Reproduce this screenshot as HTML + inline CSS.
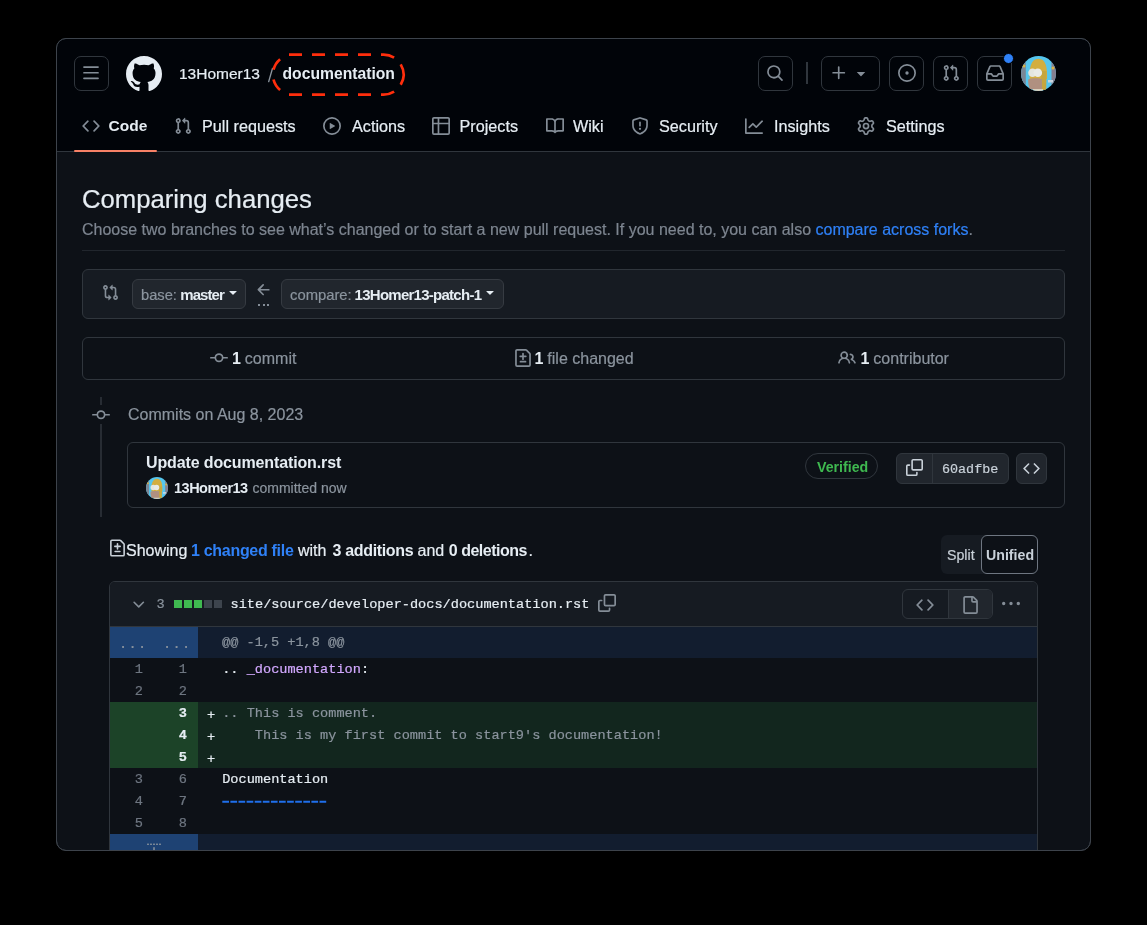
<!DOCTYPE html>
<html><head><meta charset="utf-8">
<style>
*{box-sizing:border-box;margin:0;padding:0}
html,body{width:1147px;height:925px;background:#000;overflow:hidden}
body{font-family:"Liberation Sans",sans-serif;color:#e6edf3;position:relative}
.a,.tab,.row{-webkit-text-stroke:0.2px currentColor}
b,[style*="font-weight:bold"]{-webkit-text-stroke:0 !important}
.a{position:absolute;white-space:nowrap}
.win{position:absolute;left:56px;top:38px;width:1035px;height:813px;border:1px solid #3d434b;border-radius:10px;background:#0d1117;overflow:hidden}
.hdr{position:absolute;left:0;top:0;width:100%;height:113px;background:#010409;border-bottom:1px solid #30363d}
.btn{position:absolute;border:1px solid #30363d;border-radius:7px;background:#010409}
svg{display:block}
.ic{fill:#848d97}
.tab{position:absolute;top:117px;font-size:16.2px;line-height:18px;color:#e6edf3}
.mono{font-family:"Liberation Mono",monospace}
.muted{color:#7d8590}
.row{position:absolute;left:110px;width:927px;height:22px;font-family:"Liberation Mono",monospace;font-size:13.6px;line-height:22px;color:#e6edf3}
.row.add{background:#12261e}
.row.add .n1,.row.add .n2{background:#1c4328}
.row .n1,.row .n2{position:absolute;top:0;height:22px;text-align:right;color:#6e7681;padding-top:1px}
.row .n1{left:0;width:45px;padding-right:12px}
.row .n2{left:45px;width:43px;padding-right:11px}
.row.add .n2{left:0;width:88px;color:#e6edf3;font-weight:bold;padding-right:11px}
.row .pl{position:absolute;left:97px;top:0;padding-top:3px}
.row .c{position:absolute;left:112.2px;top:0;white-space:pre;padding-top:1px}
</style></head><body><div style="position:absolute;left:0;top:0;width:1147px;height:925px;will-change:transform">
<div class="win"></div>
<div class="a" style="left:57px;top:39px;width:1033px;height:112px;background:#010409;border-radius:9px 9px 0 0"></div>
<div class="a" style="left:57px;top:151px;width:1033px;height:1px;background:#30363d"></div>

<!-- hamburger -->
<div class="btn" style="left:74px;top:56px;width:35px;height:35px"></div>
<svg class="a" style="left:81.5px;top:63.7px" width="18" height="18" viewBox="0 0 16 16"><path class="ic" d="M1 2.75A.75.75 0 0 1 1.75 2h12.5a.75.75 0 0 1 0 1.5H1.75A.75.75 0 0 1 1 2.75Zm0 5A.75.75 0 0 1 1.75 7h12.5a.75.75 0 0 1 0 1.5H1.75A.75.75 0 0 1 1 7.75ZM1.75 12h12.5a.75.75 0 0 1 0 1.5H1.75a.75.75 0 0 1 0-1.5Z"/></svg>
<!-- github logo -->
<svg class="a" style="left:126px;top:56px" width="36" height="36" viewBox="0 0 32 32"><path fill="#e6edf3" d="M16 0C7.16 0 0 7.16 0 16c0 7.08 4.58 13.06 10.94 15.18.8.14 1.1-.34 1.1-.76 0-.38-.02-1.64-.02-2.98-4.02.74-5.06-.98-5.380-1.88-.18-.46-.96-1.88-1.64-2.26-.56-.3-1.36-1.040-.02-1.06 1.26-.02 2.16 1.16 2.46 1.64 1.44 2.42 3.74 1.74 4.66 1.32.14-1.04.56-1.74 1.02-2.14-3.56-.4-7.28-1.78-7.28-7.9 0-1.74.62-3.18 1.64-4.3-.16-.4-.72-2.04.16-4.24 0 0 1.34-.42 4.4 1.64 1.28-.36 2.64-.54 4-.54 1.36 0 2.72.18 4 .54 3.06-2.08 4.4-1.64 4.4-1.64.88 2.2.32 3.84.16 4.24 1.02 1.12 1.64 2.54 1.64 4.3 0 6.14-3.74 7.5-7.3 7.9.58.5 1.08 1.46 1.08 2.96 0 2.140-.02 3.86-.02 4.4 0 .42.3.92 1.1.76A16.03 16.03 0 0 0 32 16c0-8.84-7.16-16-16-16z"/></svg>
<div class="a" style="left:179px;top:64.5px;font-size:15.5px;line-height:18px">13Homer13</div>
<svg class="a" style="left:264px;top:64px" width="12" height="22" viewBox="264 64 12 22"><path d="M268.7 81.6L272.5 68.4" stroke="#8b949e" stroke-width="1.4" stroke-linecap="round"/></svg>
<div class="a" style="left:282.5px;top:64.5px;font-size:15.7px;line-height:18px;font-weight:bold">documentation</div>
<svg class="a" style="left:260px;top:44px" width="160" height="60" viewBox="260 44 160 60"><path d="M289 54.6H302M289 94.6H302M312 54.6H325M312 94.6H325M335 54.6H348M335 94.6H348M358 54.6H371M358 94.6H371M381 54.6H383.5A20 20 0 0 1 394.1 57.6M400.7 64.4A20 20 0 0 1 400.7 84.8M394.1 91.6A20 20 0 0 1 383.5 94.6H381M273.5 79.5A20 20 0 0 0 280.1 90M280.1 59.2A20 20 0 0 0 273.5 69.7" fill="none" stroke="#ff2e0c" stroke-width="2.7"/></svg>

<!-- right header buttons -->
<div class="btn" style="left:758px;top:56px;width:35px;height:35px"></div>
<svg class="a" style="left:766px;top:63.5px" width="18" height="18" viewBox="0 0 16 16"><path class="ic" d="M10.68 11.74a6 6 0 0 1-7.922-8.982 6 6 0 0 1 8.982 7.922l3.04 3.04a.749.749 0 0 1-.326 1.275.749.749 0 0 1-.734-.215ZM11.5 7a4.499 4.499 0 1 0-8.997 0A4.499 4.499 0 0 0 11.5 7Z"/></svg>
<div class="a" style="left:806px;top:62px;width:2px;height:22px;background:#30363d"></div>
<div class="btn" style="left:821px;top:56px;width:59px;height:35px"></div>
<svg class="a" style="left:829.5px;top:63.7px" width="18" height="18" viewBox="0 0 16 16"><path class="ic" d="M7.75 2a.75.75 0 0 1 .75.75V7h4.25a.75.75 0 0 1 0 1.5H8.5v4.25a.75.75 0 0 1-1.5 0V8.5H2.75a.75.75 0 0 1 0-1.5H7V2.75A.75.75 0 0 1 7.75 2Z"/></svg>
<svg class="a" style="left:851.5px;top:63.7px" width="18" height="18" viewBox="0 0 16 16"><path class="ic" d="m4.427 7.427 3.396 3.396a.25.25 0 0 0 .354 0l3.396-3.396A.25.25 0 0 0 11.396 7H4.604a.25.25 0 0 0-.177.427Z"/></svg>
<div class="btn" style="left:889px;top:56px;width:35px;height:35px"></div>
<svg class="a" style="left:897.5px;top:63.7px" width="18" height="18" viewBox="0 0 16 16"><path class="ic" d="M8 9.5a1.5 1.5 0 1 0 0-3 1.5 1.5 0 0 0 0 3Z M8 0a8 8 0 1 1 0 16A8 8 0 0 1 8 0ZM1.5 8a6.5 6.5 0 1 0 13 0 6.5 6.5 0 0 0-13 0Z"/></svg>
<div class="btn" style="left:933px;top:56px;width:35px;height:35px"></div>
<svg class="a" style="left:941.5px;top:63.7px" width="18" height="18" viewBox="0 0 16 16"><path class="ic" d="M1.5 3.25a2.25 2.25 0 1 1 3 2.122v5.256a2.251 2.251 0 1 1-1.5 0V5.372A2.25 2.25 0 0 1 1.5 3.25Zm5.677-.177L9.573.677A.25.25 0 0 1 10 .854V2.5h1A2.5 2.5 0 0 1 13.5 5v5.628a2.251 2.251 0 1 1-1.5 0V5a1 1 0 0 0-1-1h-1v1.646a.25.25 0 0 1-.427.177L7.177 3.427a.25.25 0 0 1 0-.354ZM3.75 2.5a.75.75 0 1 0 0 1.5.75.75 0 0 0 0-1.5Zm0 9.5a.75.75 0 1 0 0 1.5.75.75 0 0 0 0-1.5Zm8.250.75a.75.75 0 1 0 1.5 0 .75.75 0 0 0-1.5 0Z"/></svg>
<div class="btn" style="left:977px;top:56px;width:35px;height:35px"></div>
<svg class="a" style="left:985.5px;top:63.7px" width="18" height="18" viewBox="0 0 16 16"><path class="ic" d="M2.8 2.06A1.75 1.75 0 0 1 4.41 1h7.18c.7 0 1.333.417 1.61 1.06l2.74 6.395c.04.093.06.194.06.295v4.5A1.75 1.75 0 0 1 14.25 15H1.75A1.75 1.75 0 0 1 0 13.250v-4.5c0-.101.02-.202.06-.295Zm1.61.44a.25.25 0 0 0-.23.152L1.887 8H4.75a.75.75 0 0 1 .6.3L6.625 10h2.75l1.275-1.7a.75.75 0 0 1 .6-.3h2.863L11.820 2.652a.25.25 0 0 0-.23-.152Zm10.09 7h-2.875l-1.275 1.7a.75.75 0 0 1-.6.3h-3.5a.75.75 0 0 1-.6-.3L4.375 9.5H1.5v3.75c0 .138.112.25.25.25h12.5a.25.25 0 0 0 .25-.25Z"/></svg>
<div class="a" style="left:1003px;top:53px;width:11px;height:11px;border-radius:50%;background:#2f81f7;border:1.5px solid #010409"></div>
<!-- avatar -->
<svg class="a" style="left:1021px;top:56px" width="35" height="35" viewBox="0 0 35 35"><defs><clipPath id="cav"><circle cx="17.5" cy="17.5" r="17.5"/></clipPath></defs><g clip-path="url(#cav)"><rect width="35" height="35" fill="#55c6ee"/><rect x="0" y="0" width="4.8" height="35" fill="#7a8797"/><rect x="30.5" y="0" width="5" height="35" fill="#857f8f"/><circle cx="3" cy="10" r="1.5" fill="#d9b445"/><circle cx="32" cy="12" r="1.5" fill="#d9b445"/><path d="M8.8 23 C8 13 9.5 3 17.4 2.8 C25 2.8 26.5 12 26 23 Z" fill="#d3ae3f"/><path d="M20.3 15 L25.5 15 L25.2 34 L20.3 34Z" fill="#c7a63e"/><circle cx="11.5" cy="16.8" r="4.3" fill="#e4e6df"/><circle cx="16.8" cy="16.8" r="4.3" fill="#e9ebe6"/><path d="M7.2 23.5 C9 21.8 18.5 21.8 20.8 23 L21 33.6 L9 33.6 C7.5 30 7 27 7.2 23.5Z" fill="#b09080"/><rect x="12" y="33" width="10" height="3" fill="#d8d0bd"/><rect x="27" y="24" width="5" height="2.5" fill="#c9d6e0"/></g></svg>

<!-- tabs -->
<svg class="a" style="left:82px;top:117px" width="18" height="18" viewBox="0 0 16 16"><path class="ic" d="M4.72 3.22a.75.75 0 0 1 1.06 1.06L2.06 8l3.72 3.72a.75.75 0 1 1-1.06 1.06L.47 8.53a.75.75 0 0 1 0-1.06Zm6.56 0a.75.75 0 1 0-1.06 1.06L13.94 8l-3.72 3.72a.75.75 0 1 0 1.06 1.06l4.25-4.25a.75.75 0 0 0 0-1.06Z"/></svg>
<div class="tab" style="left:108.5px;font-weight:bold;font-size:15.5px">Code</div>
<div class="a" style="left:74px;top:150px;width:83px;height:2px;background:#f78166;border-radius:1px"></div>
<svg class="a" style="left:174px;top:117px" width="18" height="18" viewBox="0 0 16 16"><path class="ic" d="M1.5 3.25a2.25 2.25 0 1 1 3 2.122v5.256a2.251 2.251 0 1 1-1.5 0V5.372A2.25 2.25 0 0 1 1.5 3.25Zm5.677-.177L9.573.677A.25.25 0 0 1 10 .854V2.5h1A2.5 2.5 0 0 1 13.5 5v5.628a2.251 2.251 0 1 1-1.5 0V5a1 1 0 0 0-1-1h-1v1.646a.25.25 0 0 1-.427.177L7.177 3.427a.25.25 0 0 1 0-.354ZM3.75 2.5a.75.75 0 1 0 0 1.5.75.75 0 0 0 0-1.5Zm0 9.5a.75.75 0 1 0 0 1.5.75.75 0 0 0 0-1.5Zm8.250.75a.75.75 0 1 0 1.5 0 .75.75 0 0 0-1.5 0Z"/></svg>
<div class="tab" style="left:202px">Pull requests</div>
<svg class="a" style="left:323px;top:117px" width="18" height="18" viewBox="0 0 16 16"><path class="ic" d="M8 0a8 8 0 1 1 0 16A8 8 0 0 1 8 0ZM1.5 8a6.5 6.5 0 1 0 13 0 6.5 6.5 0 0 0-13 0Zm4.879-2.773 4.264 2.559a.25.25 0 0 1 0 .428l-4.264 2.559A.25.25 0 0 1 6 10.559V5.442a.25.25 0 0 1 .379-.215Z"/></svg>
<div class="tab" style="left:352px">Actions</div>
<svg class="a" style="left:432px;top:117px" width="18" height="18" viewBox="0 0 16 16"><path class="ic" d="M0 1.75C0 .784.784 0 1.75 0h12.5C15.216 0 16 .784 16 1.75v12.5A1.75 1.75 0 0 1 14.25 16H1.75A1.75 1.75 0 0 1 0 14.25ZM6.5 6.5v8h7.75a.25.25 0 0 0 .25-.25V6.5Zm8-1.5V1.75a.25.25 0 0 0-.25-.25H6.5V5Zm-13 1.5v7.750c0 .138.112.25.25.25H5v-8ZM5 5V1.5H1.750a.25.25 0 0 0-.25.25V5Z"/></svg>
<div class="tab" style="left:459.5px">Projects</div>
<svg class="a" style="left:546px;top:117px" width="18" height="18" viewBox="0 0 16 16"><path class="ic" d="M0 1.75A.75.75 0 0 1 .75 1h4.253c1.227 0 2.317.59 3 1.501A3.743 3.743 0 0 1 11.006 1h4.245a.75.75 0 0 1 .75.75v10.5a.75.75 0 0 1-.75.75h-4.507a2.25 2.25 0 0 0-1.591.659l-.622.621a.75.75 0 0 1-1.06 0l-.622-.621A2.25 2.25 0 0 0 5.258 13H.75a.75.75 0 0 1-.75-.75Zm7.251 10.324.004-5.073-.002-2.253A2.25 2.25 0 0 0 5.003 2.5H1.5v9h3.757a3.75 3.75 0 0 1 1.994.574ZM8.755 4.750l-.004 7.322a3.752 3.752 0 0 1 1.992-.572H14.5v-9h-3.495a2.25 2.25 0 0 0-2.25 2.25Z"/></svg>
<div class="tab" style="left:573px">Wiki</div>
<svg class="a" style="left:631px;top:117px" width="18" height="18" viewBox="0 0 16 16"><path class="ic" d="M7.467.133a1.748 1.748 0 0 1 1.066 0l5.25 1.68A1.75 1.75 0 0 1 15 3.48V7c0 1.566-.32 3.182-1.303 4.682-.983 1.498-2.585 2.813-5.032 3.855a1.697 1.697 0 0 1-1.33 0c-2.447-1.042-4.049-2.357-5.032-3.855C1.32 10.182 1 8.566 1 7V3.48a1.755 1.755 0 0 1 1.217-1.667Zm.61 1.429a.25.25 0 0 0-.153 0l-5.25 1.68a.25.25 0 0 0-.174.238V7c0 1.358.275 2.666 1.057 3.860.784 1.194 2.121 2.340 4.366 3.297a.196.196 0 0 0 .154 0c2.245-.956 3.582-2.104 4.366-3.298C13.225 9.666 13.5 8.360 13.5 7V3.48a.251.251 0 0 0-.174-.237l-5.25-1.68ZM8.75 4.75v3a.75.75 0 0 1-1.5 0v-3a.75.75 0 0 1 1.5 0ZM9 10.5a1 1 0 1 1-2 0 1 1 0 0 1 2 0Z"/></svg>
<div class="tab" style="left:659px">Security</div>
<svg class="a" style="left:745px;top:117px" width="18" height="18" viewBox="0 0 16 16"><path class="ic" d="M1.5 1.75V13.5h13.75a.75.75 0 0 1 0 1.5H.75a.75.75 0 0 1-.75-.75V1.75a.75.75 0 0 1 1.5 0Zm14.28 2.53-5.25 5.25a.75.75 0 0 1-1.06 0L7 7.06 4.28 9.78a.751.751 0 0 1-1.042-.018.751.751 0 0 1-.018-1.042l3.25-3.25a.75.75 0 0 1 1.06 0L10 7.94l4.72-4.72a.751.751 0 0 1 1.042.018.751.751 0 0 1 .018 1.042Z"/></svg>
<div class="tab" style="left:774px">Insights</div>
<svg class="a" style="left:857px;top:117px" width="18" height="18" viewBox="0 0 16 16"><path class="ic" d="M8 0a8.2 8.2 0 0 1 .701.031C9.444.095 9.99.645 10.16 1.29l.288 1.107c.018.066.079.158.212.224.231.114.454.243.668.386.123.082.233.09.299.071l1.103-.303c.644-.176 1.392.021 1.82.63.27.385.506.792.704 1.218.315.675.111 1.422-.364 1.891l-.814.806c-.049.048-.098.147-.088.294.016.257.016.515 0 .772-.01.147.038.246.088.294l.814.806c.475.469.679 1.216.364 1.891a7.977 7.977 0 0 1-.704 1.217c-.428.61-1.176.807-1.82.63l-1.102-.302c-.067-.019-.177-.011-.3.071a5.909 5.909 0 0 1-.668.386c-.133.066-.194.158-.211.224l-.29 1.106c-.168.646-.715 1.196-1.458 1.26a8.006 8.006 0 0 1-1.402 0c-.743-.064-1.289-.614-1.458-1.26l-.289-1.106c-.018-.066-.079-.158-.212-.224a5.738 5.738 0 0 1-.668-.386c-.123-.082-.233-.09-.299-.071l-1.103.303c-.644.176-1.392-.021-1.82-.63a8.12 8.12 0 0 1-.704-1.218c-.315-.675-.111-1.422.363-1.891l.815-.806c.05-.048.098-.147.088-.294a6.214 6.214 0 0 1 0-.772c.01-.147-.038-.246-.088-.294l-.815-.806C.635 6.045.431 5.298.746 4.623a7.92 7.92 0 0 1 .704-1.217c.428-.61 1.176-.807 1.82-.63l1.102.302c.067.019.177.011.3-.071.214-.143.437-.272.668-.386.133-.066.194-.158.211-.224l.29-1.106C6.009.645 6.556.095 7.299.03 7.53.01 7.764 0 8 0Zm-.571 1.525c-.036.003-.108.036-.137.146l-.289 1.105c-.147.561-.549.967-.998 1.189-.173.086-.34.183-.5.29-.417.278-.97.423-1.529.27l-1.103-.303c-.109-.03-.175.016-.195.045-.22.312-.412.644-.573.99-.014.031-.021.11.059.19l.815.806c.411.406.562.957.53 1.456a4.709 4.709 0 0 0 0 .582c.032.499-.119 1.05-.53 1.456l-.815.806c-.081.08-.073.159-.059.19.162.346.353.677.573.989.02.03.085.076.195.046l1.102-.303c.56-.153 1.113-.008 1.53.27.161.107.328.204.501.29.447.222.85.629.997 1.189l.289 1.105c.029.109.101.143.137.146a6.6 6.6 0 0 0 1.142 0c.036-.003.108-.036.137-.146l.289-1.105c.147-.561.549-.967.998-1.189.173-.086.34-.183.5-.29.417-.278.97-.423 1.529-.27l1.103.303c.109.029.175-.016.195-.045.22-.313.411-.644.573-.99.014-.031.021-.11-.059-.19l-.815-.806c-.411-.406-.562-.957-.53-1.456a4.709 4.709 0 0 0 0-.582c-.032-.499.119-1.05.53-1.456l.815-.806c.081-.08.073-.159.059-.19a6.464 6.464 0 0 0-.573-.989c-.02-.03-.085-.076-.195-.046l-1.102.303c-.56.153-1.113.008-1.53-.27a4.44 4.44 0 0 0-.501-.29c-.447-.222-.85-.629-.997-1.189l-.289-1.105c-.029-.11-.101-.143-.137-.146a6.6 6.6 0 0 0-1.142 0ZM11 8a3 3 0 1 1-6 0 3 3 0 0 1 6 0ZM9.5 8a1.5 1.5 0 1 0-3.001.001A1.5 1.5 0 0 0 9.5 8Z"/></svg>
<div class="tab" style="left:886px">Settings</div>


<!-- CONTENT -->
<div class="a" style="left:82px;top:184.2px;font-size:25.7px;line-height:30px;color:#e6edf3">Comparing changes</div>
<div class="a muted" style="left:82px;top:220px;font-size:16px;line-height:20px">Choose two branches to see what’s changed or to start a new pull request. If you need to, you can also <span style="color:#2f81f7">compare across forks</span>.</div>
<div class="a" style="left:82px;top:250px;width:983px;height:1px;background:#21262d"></div>

<!-- compare box -->
<div class="a" style="left:82px;top:269px;width:983px;height:50px;background:#161b22;border:1px solid #30363d;border-radius:6px"></div>
<svg class="a" style="left:101.5px;top:283.5px" width="17" height="17" viewBox="0 0 16 16"><path class="ic" d="M9.573.677A.25.25 0 0 1 10 .854V2.5h1A2.5 2.5 0 0 1 13.5 5v5.628a2.251 2.251 0 1 1-1.5 0V5a1 1 0 0 0-1-1h-1v1.646a.25.25 0 0 1-.427.177L7.177 3.427a.25.25 0 0 1 0-.354ZM6 12v-1.646a.25.25 0 0 1 .427-.177l2.396 2.396a.25.25 0 0 1 0 .354l-2.396 2.396A.25.25 0 0 1 6 15.146V13.5H5A2.5 2.5 0 0 1 2.5 11V5.372a2.25 2.25 0 1 1 1.5 0V11a1 1 0 0 0 1 1ZM4 3.25a.75.75 0 1 0-1.5 0 .75.75 0 0 0 1.5 0ZM12.75 12a.75.75 0 1 0 0 1.5.75.75 0 0 0 0-1.5Z"/></svg>
<div class="a" style="left:132px;top:279px;width:114px;height:30px;background:#21262d;border:1px solid #363b42;border-radius:6px"></div>
<div class="a" style="left:141px;top:285px;font-size:14.7px;line-height:20px;color:#8b949e">base:</div><div class="a" style="left:180.3px;top:285px;font-size:15px;line-height:20px;color:#e6edf3;font-weight:bold;letter-spacing:-0.95px">master</div>
<svg class="a" style="left:225px;top:284px" width="16" height="16" viewBox="0 0 16 16"><path fill="#e6edf3" d="m4.427 7.427 3.396 3.396a.25.25 0 0 0 .354 0l3.396-3.396A.25.25 0 0 0 11.396 7H4.604a.25.25 0 0 0-.177.427Z"/></svg>
<svg class="a" style="left:254.9px;top:280.9px" width="18" height="18" viewBox="0 0 16 16"><path class="ic" d="M7.78 12.53a.75.75 0 0 1-1.06 0L2.47 8.28a.75.75 0 0 1 0-1.06l4.25-4.25a.751.751 0 0 1 1.042.018.751.751 0 0 1 .018 1.042L4.81 7h7.44a.75.75 0 0 1 0 1.5H4.81l2.97 2.97a.75.75 0 0 1 0 1.06Z"/></svg>
<div class="a" style="left:258px;top:304px;width:2.4px;height:2.4px;background:#848d97"></div>
<div class="a" style="left:262.5px;top:304px;width:2.4px;height:2.4px;background:#848d97"></div>
<div class="a" style="left:266.8px;top:304px;width:2.4px;height:2.4px;background:#848d97"></div>
<div class="a" style="left:281px;top:279px;width:223px;height:30px;background:#21262d;border:1px solid #363b42;border-radius:6px"></div>
<div class="a" style="left:290px;top:285px;font-size:14.8px;line-height:20px;color:#8b949e">compare:</div><div class="a" style="left:354.6px;top:285px;font-size:15px;line-height:20px;color:#e6edf3;font-weight:bold;letter-spacing:-0.74px">13Homer13-patch-1</div>
<svg class="a" style="left:482px;top:284px" width="16" height="16" viewBox="0 0 16 16"><path fill="#e6edf3" d="m4.427 7.427 3.396 3.396a.25.25 0 0 0 .354 0l3.396-3.396A.25.25 0 0 0 11.396 7H4.604a.25.25 0 0 0-.177.427Z"/></svg>

<!-- stats box -->
<div class="a" style="left:82px;top:337px;width:983px;height:43px;border:1px solid #30363d;border-radius:6px"></div>
<svg class="a" style="left:209.5px;top:349px" width="18" height="18" viewBox="0 0 16 16"><path class="ic" d="M11.93 8.5a4.002 4.002 0 0 1-7.86 0H.75a.75.75 0 0 1 0-1.5h3.32a4.002 4.002 0 0 1 7.860 0h3.32a.75.75 0 0 1 0 1.5Zm-1.43-.75a2.5 2.5 0 1 0-5 0 2.5 2.5 0 0 0 5 0Z"/></svg>
<div class="a" style="left:232px;top:348.5px;font-size:16px;line-height:20px;color:#8b949e"><b style="color:#e6edf3;letter-spacing:-0.5px">1</b> commit</div>
<svg class="a" style="left:513.5px;top:349px" width="18" height="18" viewBox="0 0 16 16"><path class="ic" d="M1 1.75C1 .784 1.784 0 2.75 0h7.586c.464 0 .909.184 1.237.513l2.914 2.914c.329.328.513.773.513 1.237v9.586A1.75 1.75 0 0 1 13.25 16H2.75A1.75 1.75 0 0 1 1 14.25Zm1.75-.25a.25.25 0 0 0-.25.25v12.5c0 .138.112.25.25.25h10.5a.25.25 0 0 0 .25-.25V4.664a.25.25 0 0 0-.073-.177l-2.914-2.914a.25.25 0 0 0-.177-.073ZM8 3.25a.75.75 0 0 1 .75.75v1.75h1.75a.75.75 0 0 1 0 1.5H8.75v1.75a.75.75 0 0 1-1.5 0V7.25H5.5a.75.75 0 0 1 0-1.5h1.75V4A.75.75 0 0 1 8 3.25Zm-3 8a.75.75 0 0 1 .75-.75h4.5a.75.75 0 0 1 0 1.5h-4.5a.75.75 0 0 1-.75-.75Z"/></svg>
<div class="a" style="left:534.5px;top:348.5px;font-size:16px;line-height:20px;color:#8b949e"><b style="color:#e6edf3;letter-spacing:-0.5px">1</b> file changed</div>
<svg class="a" style="left:837.5px;top:349px" width="18" height="18" viewBox="0 0 16 16"><path class="ic" d="M2 5.5a3.5 3.5 0 1 1 5.898 2.549 5.508 5.508 0 0 1 3.034 4.084.75.75 0 1 1-1.482.235 4 4 0 0 0-7.9 0 .75.75 0 0 1-1.482-.236A5.507 5.507 0 0 1 3.102 8.05 3.493 3.493 0 0 1 2 5.5ZM11 4a3.001 3.001 0 0 1 2.22 5.018 5.01 5.01 0 0 1 2.56 3.012.749.749 0 0 1-.885.954.752.752 0 0 1-.549-.514 3.507 3.507 0 0 0-2.522-2.372.75.75 0 0 1-.574-.73v-.352a.75.75 0 0 1 .416-.672A1.5 1.5 0 0 0 11 5.5.75.75 0 0 1 11 4Zm-5.5-.5a2 2 0 1 0-.001 3.999A2 2 0 0 0 5.5 3.5Z"/></svg>
<div class="a" style="left:860.5px;top:348.5px;font-size:16px;line-height:20px;color:#8b949e"><b style="color:#e6edf3;letter-spacing:-0.5px">1</b> contributor</div>

<!-- timeline -->
<div class="a" style="left:100px;top:397px;width:2px;height:8px;background:#272c33"></div>
<div class="a" style="left:100px;top:424px;width:2px;height:93px;background:#272c33"></div>
<svg class="a" style="left:92px;top:405.5px" width="18" height="18" viewBox="0 0 16 16"><path class="ic" d="M11.93 8.5a4.002 4.002 0 0 1-7.86 0H.75a.75.75 0 0 1 0-1.5h3.32a4.002 4.002 0 0 1 7.860 0h3.32a.75.75 0 0 1 0 1.5Zm-1.43-.75a2.5 2.5 0 1 0-5 0 2.5 2.5 0 0 0 5 0Z"/></svg>
<div class="a" style="left:128px;top:405px;font-size:16px;line-height:20px;color:#8b949e">Commits on Aug 8, 2023</div>

<!-- commit box -->
<div class="a" style="left:127px;top:442px;width:938px;height:66px;border:1px solid #30363d;border-radius:6px"></div>
<div class="a" style="left:146px;top:453px;font-size:16px;line-height:20px;font-weight:bold;color:#e6edf3;letter-spacing:-0.13px">Update documentation.rst</div>
<svg class="a" style="left:146px;top:477px" width="22" height="22" viewBox="0 0 35 35"><defs><clipPath id="cav2"><circle cx="17.5" cy="17.5" r="17.5"/></clipPath></defs><g clip-path="url(#cav2)"><rect width="35" height="35" fill="#55c6ee"/><rect x="0" y="0" width="4.8" height="35" fill="#7a8797"/><rect x="30.5" y="0" width="5" height="35" fill="#857f8f"/><circle cx="3" cy="10" r="1.5" fill="#d9b445"/><circle cx="32" cy="12" r="1.5" fill="#d9b445"/><path d="M8.8 23 C8 13 9.5 3 17.4 2.8 C25 2.8 26.5 12 26 23 Z" fill="#d3ae3f"/><path d="M20.3 15 L25.5 15 L25.2 34 L20.3 34Z" fill="#c7a63e"/><circle cx="11.5" cy="16.8" r="4.3" fill="#e4e6df"/><circle cx="16.8" cy="16.8" r="4.3" fill="#e9ebe6"/><path d="M7.2 23.5 C9 21.8 18.5 21.8 20.8 23 L21 33.6 L9 33.6 C7.5 30 7 27 7.2 23.5Z" fill="#b09080"/><rect x="12" y="33" width="10" height="3" fill="#d8d0bd"/><rect x="27" y="24" width="5" height="2.5" fill="#c9d6e0"/></g></svg>
<div class="a" style="left:174px;top:478px;font-size:14.5px;line-height:20px;color:#e6edf3;font-weight:bold;letter-spacing:-0.5px">13Homer13</div><div class="a" style="left:252.5px;top:478px;font-size:14px;line-height:20px;color:#8b949e">committed now</div>

<div class="a" style="left:805px;top:453px;width:73px;height:26px;border:1px solid #30363d;border-radius:13px"></div>
<div class="a" style="left:817px;top:457px;font-size:14.2px;line-height:20px;font-weight:bold;color:#3fb950">Verified</div>
<div class="a" style="left:896px;top:453px;width:113px;height:31px;background:#21262d;border:1px solid #30363d;border-radius:6px"></div>
<div class="a" style="left:932px;top:454px;width:1px;height:29px;background:#30363d"></div>
<svg class="a" style="left:906px;top:459px" width="17" height="17" viewBox="0 0 16 16"><path fill="#c9d1d9" d="M0 6.75C0 5.784.784 5 1.75 5h1.5a.75.75 0 0 1 0 1.5h-1.5a.25.25 0 0 0-.25.25v7.5c0 .138.112.25.25.25h7.5a.25.25 0 0 0 .25-.25v-1.5a.75.75 0 0 1 1.5 0v1.5A1.75 1.75 0 0 1 9.25 16h-7.5A1.75 1.75 0 0 1 0 14.25Z M5 1.75C5 .784 5.784 0 6.75 0h7.5C15.216 0 16 .784 16 1.75v7.5A1.75 1.75 0 0 1 14.25 11h-7.5A1.75 1.75 0 0 1 5 9.25Zm1.75-.25a.25.25 0 0 0-.25.25v7.5c0 .138.112.25.25.25h7.5a.25.25 0 0 0 .25-.25v-7.5a.25.25 0 0 0-.25-.25Z"/></svg>
<div class="a mono" style="left:942px;top:460px;font-size:13.4px;line-height:20px;color:#c9d1d9">60adfbe</div>
<div class="a" style="left:1016px;top:453px;width:31px;height:31px;background:#21262d;border:1px solid #30363d;border-radius:6px"></div>
<svg class="a" style="left:1023px;top:460px" width="17" height="17" viewBox="0 0 16 16"><path fill="#c9d1d9" d="M4.72 3.22a.75.75 0 0 1 1.06 1.06L2.06 8l3.72 3.72a.75.75 0 1 1-1.06 1.06L.47 8.53a.75.75 0 0 1 0-1.06Zm6.56 0a.75.75 0 1 0-1.06 1.06L13.940 8l-3.72 3.72a.75.75 0 1 0 1.06 1.06l4.25-4.25a.75.75 0 0 0 0-1.06Z"/></svg>

<!-- showing -->
<svg class="a" style="left:109px;top:539px" width="17" height="18" viewBox="0 0 16 16"><path fill="#c9d1d9" d="M1 1.75C1 .784 1.784 0 2.75 0h7.586c.464 0 .909.184 1.237.513l2.914 2.914c.329.328.513.773.513 1.237v9.586A1.75 1.75 0 0 1 13.25 16H2.75A1.75 1.75 0 0 1 1 14.25Zm1.75-.25a.25.25 0 0 0-.25.25v12.5c0 .138.112.25.25.25h10.5a.25.25 0 0 0 .25-.25V4.664a.25.25 0 0 0-.073-.177l-2.914-2.914a.25.25 0 0 0-.177-.073ZM8 3.25a.75.75 0 0 1 .75.75v1.75h1.75a.75.75 0 0 1 0 1.5H8.75v1.75a.75.75 0 0 1-1.5 0V7.25H5.5a.75.75 0 0 1 0-1.5h1.75V4A.75.75 0 0 1 8 3.25Zm-3 8a.75.75 0 0 1 .75-.75h4.5a.75.75 0 0 1 0 1.5h-4.5a.75.75 0 0 1-.75-.75Z"/></svg>
<div class="a" style="left:126px;top:540.5px;font-size:16px;line-height:20px;color:#e6edf3">Showing</div>
<div class="a" style="left:191px;top:540.5px;font-size:16px;line-height:20px;color:#2f81f7;font-weight:bold;letter-spacing:-0.3px">1 changed file</div>
<div class="a" style="left:298px;top:540.5px;font-size:16px;line-height:20px;color:#e6edf3">with</div>
<div class="a" style="left:332.5px;top:540.5px;font-size:16px;line-height:20px;color:#e6edf3;font-weight:bold;letter-spacing:-0.33px">3 additions</div>
<div class="a" style="left:417.5px;top:540.5px;font-size:16px;line-height:20px;color:#e6edf3">and</div>
<div class="a" style="left:448.8px;top:540.5px;font-size:16px;line-height:20px;color:#e6edf3;font-weight:bold;letter-spacing:-0.5px">0 deletions</div>
<div class="a" style="left:528.5px;top:540.5px;font-size:16px;line-height:20px;color:#e6edf3">.</div>

<div class="a" style="left:941px;top:535px;width:97px;height:39px;background:#161b22;border-radius:6px"></div>
<div class="a" style="left:981px;top:535px;width:57px;height:39px;background:#0d1117;border:1px solid #6e7681;border-radius:6px"></div>
<div class="a" style="left:947px;top:545px;font-size:14.2px;line-height:20px;color:#c9d1d9">Split</div>
<div class="a" style="left:986px;top:545px;font-size:14.2px;line-height:20px;font-weight:bold;color:#c9d1d9">Unified</div>

<!-- file box -->
<div class="a" style="left:109px;top:581px;width:929px;height:290px;border:1px solid #30363d;border-radius:6px 6px 0 0;background:#0d1117"></div>
<div class="a" style="left:110px;top:582px;width:927px;height:44px;background:#161b22;border-radius:5px 5px 0 0"></div>
<div class="a" style="left:110px;top:626px;width:927px;height:1px;background:#30363d"></div>
<svg class="a" style="left:129.5px;top:595.6px" width="17.5" height="17.5" viewBox="0 0 16 16"><path class="ic" d="M12.78 5.22a.749.749 0 0 1 0 1.06l-4.25 4.25a.749.749 0 0 1-1.06 0L3.22 6.28a.749.749 0 0 1 .018-1.042.749.749 0 0 1 1.042-.018L8 8.94l3.72-3.72a.749.749 0 0 1 1.06 0Z"/></svg>
<div class="a mono" style="left:156.5px;top:595px;font-size:13.6px;line-height:20px;color:#8b949e">3</div>
<div class="a" style="left:174px;top:600px;width:8px;height:8px;background:#3fb950"></div>
<div class="a" style="left:184px;top:600px;width:8px;height:8px;background:#3fb950"></div>
<div class="a" style="left:193.5px;top:600px;width:8px;height:8px;background:#3fb950"></div>
<div class="a" style="left:203.5px;top:600px;width:8px;height:8px;background:#3d444d"></div>
<div class="a" style="left:213.5px;top:600px;width:8px;height:8px;background:#3d444d"></div>
<div class="a mono" style="left:230.5px;top:595px;font-size:13.6px;line-height:20px;color:#e6edf3">site/source/developer-docs/documentation.rst</div>
<svg class="a" style="left:598px;top:594px" width="18" height="18" viewBox="0 0 16 16"><path class="ic" d="M0 6.75C0 5.784.784 5 1.75 5h1.5a.75.75 0 0 1 0 1.5h-1.5a.25.25 0 0 0-.25.25v7.5c0 .138.112.25.25.25h7.5a.25.25 0 0 0 .25-.25v-1.5a.75.75 0 0 1 1.5 0v1.5A1.75 1.75 0 0 1 9.25 16h-7.5A1.75 1.75 0 0 1 0 14.25Z M5 1.75C5 .784 5.784 0 6.75 0h7.5C15.216 0 16 .784 16 1.75v7.5A1.75 1.75 0 0 1 14.25 11h-7.5A1.75 1.75 0 0 1 5 9.25Zm1.75-.25a.25.25 0 0 0-.25.25v7.5c0 .138.112.25.25.25h7.5a.25.25 0 0 0 .25-.25v-7.5a.25.25 0 0 0-.25-.25Z"/></svg>
<div class="a" style="left:902px;top:589px;width:91px;height:30px;border:1px solid #30363d;border-radius:6px;overflow:hidden"><div style="position:absolute;left:45px;top:0;width:46px;height:30px;background:#21262d;border-left:1px solid #30363d"></div></div>
<svg class="a" style="left:916px;top:596px" width="18" height="18" viewBox="0 0 16 16"><path class="ic" d="M4.72 3.22a.75.75 0 0 1 1.06 1.06L2.06 8l3.72 3.72a.75.75 0 1 1-1.06 1.06L.47 8.53a.75.75 0 0 1 0-1.06Zm6.56 0a.75.75 0 1 0-1.06 1.06L13.94 8l-3.72 3.72a.75.75 0 1 0 1.06 1.06l4.25-4.25a.75.75 0 0 0 0-1.06Z"/></svg>
<svg class="a" style="left:961px;top:596px" width="18" height="18" viewBox="0 0 16 16"><path class="ic" d="M2 1.75C2 .784 2.784 0 3.75 0h6.586c.464 0 .909.184 1.237.513l2.914 2.914c.329.328.513.773.513 1.237v9.586A1.75 1.75 0 0 1 13.25 16h-9.5A1.75 1.75 0 0 1 2 14.25Zm1.75-.25a.25.25 0 0 0-.25.25v12.5c0 .138.112.25.25.25h9.5a.25.25 0 0 0 .25-.25V6h-2.75A1.75 1.75 0 0 1 9 4.25V1.5Zm6.75.062V4.25c0 .138.112.25.25.25h2.688l-.011-.013-2.914-2.914-.013-.011Z"/></svg>
<svg class="a" style="left:1002px;top:595px" width="18" height="18" viewBox="0 0 16 16"><path class="ic" d="M8 9a1.5 1.5 0 1 0 0-3 1.5 1.5 0 0 0 0 3ZM1.5 9a1.5 1.5 0 1 0 0-3 1.5 1.5 0 0 0 0 3Zm13 0a1.5 1.5 0 1 0 0-3 1.5 1.5 0 0 0 0 3Z"/></svg>

<!-- hunk -->
<div class="a" style="left:110px;top:627px;width:88px;height:31px;background:#1e4273"></div>
<div class="a" style="left:198px;top:627px;width:839px;height:31px;background:#121d2f"></div>
<div class="a mono" style="left:119px;top:634.5px;font-size:13.6px;line-height:20px;color:#8b949e;letter-spacing:1.3px">...</div><div class="a mono" style="left:163px;top:634.5px;font-size:13.6px;line-height:20px;color:#8b949e;letter-spacing:1.3px">...</div>
<div class="a mono" style="left:222px;top:633px;font-size:13.6px;line-height:20px;color:#8b949e">@@ -1,5 +1,8 @@</div>

<div class="code">
<div class="row" style="top:658px"><span class="n1">1</span><span class="n2">1</span><span class="c"><span style="color:#e6edf3">.. </span><span style="color:#d2a8ff">_documentation</span>:</span></div>
<div class="row" style="top:680px"><span class="n1">2</span><span class="n2">2</span></div>
<div class="row add" style="top:702px"><span class="n2">3</span><span class="pl">+</span><span class="c" style="color:#8b949e">.. This is comment.</span></div>
<div class="row add" style="top:724px"><span class="n2">4</span><span class="pl">+</span><span class="c" style="color:#8b949e">    This is my first commit to start9's documentation!</span></div>
<div class="row add" style="top:746px"><span class="n2">5</span><span class="pl">+</span></div>
<div class="row" style="top:768px"><span class="n1">3</span><span class="n2">6</span><span class="c">Documentation</span></div>
<div class="row" style="top:790px"><span class="n1">4</span><span class="n2">7</span><svg style="position:absolute;left:112px;top:0" width="110" height="22"><line x1="0.3" y1="11.8" x2="105.6" y2="11.8" stroke="#1f6feb" stroke-width="2.1" stroke-dasharray="6.7 1.4"/></svg></div>
<div class="row" style="top:812px"><span class="n1">5</span><span class="n2">8</span></div>
</div>
<div class="a" style="left:110px;top:834px;width:88px;height:20px;background:#1e4273"></div>
<div class="a" style="left:198px;top:834px;width:839px;height:20px;background:#121d2f"></div>
<svg class="a" style="left:146px;top:839.5px" width="16" height="16" viewBox="0 0 16 16"><path fill="#8b949e" d="M8.177 14.323l2.896-2.896a.25.25 0 0 0-.177-.427H8.75V7.764a.75.75 0 1 0-1.5 0V11H5.104a.25.25 0 0 0-.177.427l2.896 2.896a.25.25 0 0 0 .354 0ZM2.25 5a.75.75 0 0 0 0-1.5h-.5a.75.75 0 0 0 0 1.5h.5ZM6 4.25a.75.75 0 0 1-.75.75h-.5a.75.75 0 0 1 0-1.5h.5a.75.75 0 0 1 .75.75ZM8.25 5a.75.75 0 0 0 0-1.5h-.5a.75.75 0 0 0 0 1.5h.5ZM12 4.25a.75.75 0 0 1-.75.75h-.5a.75.75 0 0 1 0-1.5h.5a.75.75 0 0 1 .75.75Zm2.25.75a.75.75 0 0 0 0-1.5h-.5a.75.75 0 0 0 0 1.5h.5Z"/></svg>

<!-- mask below window & window border overlay -->
<div class="a" style="left:0;top:851px;width:1147px;height:74px;background:#000"></div>
<div class="a" style="left:56px;top:38px;width:1035px;height:813px;border:1px solid #3d434b;border-radius:10px;box-shadow:0 0 0 12px #000"></div>
</div></body></html>
